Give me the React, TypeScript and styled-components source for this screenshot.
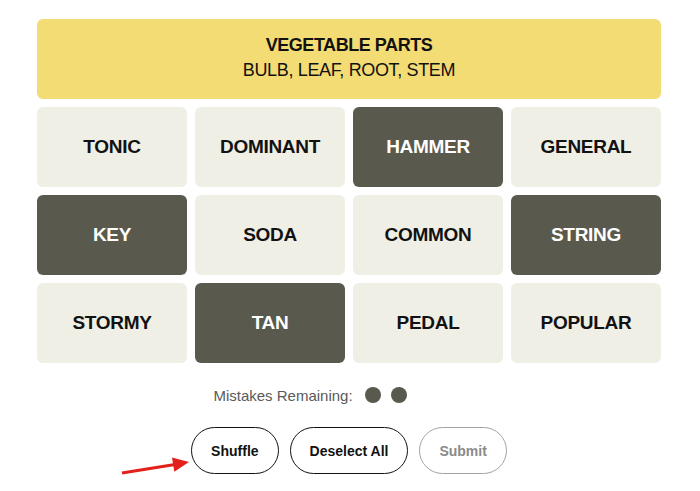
import { createGlobalStyle } from 'styled-components';
import styled from 'styled-components';

const GlobalStyle = createGlobalStyle`
  html, body {
    margin: 0;
    padding: 0;
    background: #ffffff;
    font-family: 'Liberation Sans', Arial, sans-serif;
    color: #121212;
  }
`;

const PAGE = styled.div`
  position: relative;
  width: 700px;
  height: 491px;
  overflow: hidden;
`;
const BOARD = styled.div`
  width: 624px;
  margin: 0 0 0 37px;
  padding-top: 19px;
  display: flex;
  flex-direction: column;
  gap: 8px;
`;
const SOLVED = styled.div`
  height: 80px;
  box-sizing: border-box;
  padding-bottom: 4px;
  border-radius: 6px;
  background: #f4dc74;
  display: flex;
  flex-direction: column;
  align-items: center;
  justify-content: center;
  gap: 3px;
  font-size: 18px;
  line-height: 22px;
`;
const TITLE = styled.div`
  font-weight: 700;
  letter-spacing: -0.45px;
`;
const MEMBERS = styled.div`
  letter-spacing: -0.35px;
`;
const GRID = styled.div`
  display: grid;
  grid-template-columns: repeat(4, 150px);
  grid-auto-rows: 80px;
  gap: 8px;
`;
const TILE = styled.div<{ $selected?: boolean }>`
  border-radius: 6px;
  display: flex;
  align-items: center;
  justify-content: center;
  font-size: 19px;
  font-weight: 700;
  letter-spacing: -0.3px;
  background: ${(p) => (p.$selected ? '#5a594e' : '#efefe6')};
  color: ${(p) => (p.$selected ? '#ffffff' : '#121212')};
`;
const MISTAKES = styled.div`
  margin-top: 12px;
  height: 24px;
  display: flex;
  align-items: center;
  justify-content: center;
  gap: 12px;
  font-size: 15px;
  color: #5a5a5a;
`;
const DOTS = styled.div`
  width: 120px;
  display: flex;
  gap: 10px;
`;
const DOT = styled.span`
  width: 16px;
  height: 16px;
  border-radius: 50%;
  background: #5a594e;
`;
const CONTROLS = styled.div`
  margin-top: 12px;
  display: flex;
  justify-content: center;
  gap: 11px;
`;
const BUTTON = styled.button<{ $disabled?: boolean }>`
  height: 47px;
  padding: 0 19px;
  border-radius: 24px;
  background: #ffffff;
  font-family: 'Liberation Sans', Arial, sans-serif;
  font-size: 14px;
  font-weight: 700;
  border: 1px solid ${(p) => (p.$disabled ? '#a3a3a3' : '#121212')};
  color: ${(p) => (p.$disabled ? '#8a8a8a' : '#121212')};
  cursor: ${(p) => (p.$disabled ? 'default' : 'pointer')};
`;
const ARROW = styled.svg`
  position: absolute;
  left: 118px;
  top: 452px;
`;

const WORDS: [string, boolean][] = [
  ['TONIC', false],
  ['DOMINANT', false],
  ['HAMMER', true],
  ['GENERAL', false],
  ['KEY', true],
  ['SODA', false],
  ['COMMON', false],
  ['STRING', true],
  ['STORMY', false],
  ['TAN', true],
  ['PEDAL', false],
  ['POPULAR', false],
];

export default function App(): React.ReactElement {
  return (
    <PAGE>
      <GlobalStyle />
      <BOARD>
        <SOLVED>
          <TITLE>VEGETABLE PARTS</TITLE>
          <MEMBERS>BULB, LEAF, ROOT, STEM</MEMBERS>
        </SOLVED>
        <GRID>
          {WORDS.map(([word, selected]) => (
            <TILE key={word} $selected={selected}>
              {word}
            </TILE>
          ))}
        </GRID>
        <MISTAKES>
          <span>Mistakes Remaining:</span>
          <DOTS>
            <DOT />
            <DOT />
          </DOTS>
        </MISTAKES>
        <CONTROLS>
          <BUTTON>Shuffle</BUTTON>
          <BUTTON>Deselect All</BUTTON>
          <BUTTON $disabled>Submit</BUTTON>
        </CONTROLS>
      </BOARD>
      {/* annotation pointing at Shuffle */}
      <ARROW width="76" height="26" viewBox="0 0 76 26">
        <line x1="4" y1="21" x2="57" y2="12.5" stroke="#e3201c" strokeWidth="3.2" />
        <polygon points="71,10 56.3,19.8 54,5.5" fill="#e3201c" />
      </ARROW>
    </PAGE>
  );
}
